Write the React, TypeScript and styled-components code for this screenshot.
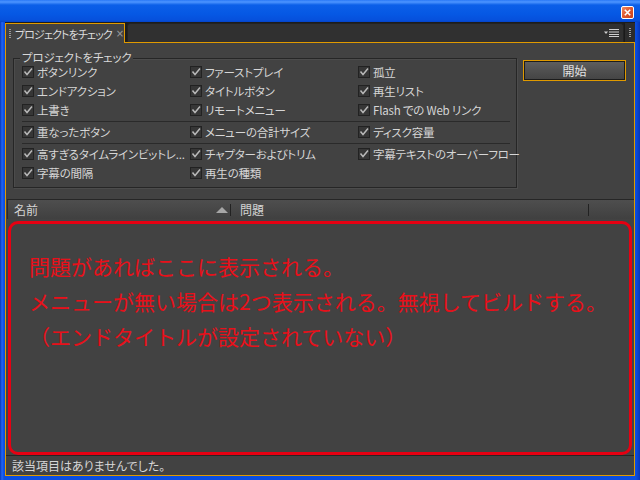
import React from 'react';
import styled, { createGlobalStyle } from 'styled-components';

const GlobalStyle = createGlobalStyle`
  html, body {
    margin: 0;
    padding: 0;
    background: #0a4ee0;
  }
  body {
    font-family: "Noto Sans CJK JP", "Noto Sans", sans-serif;
  }
`;

const ORANGE = '#e09a00';
const PANEL = '#424242';

const Window = styled.div`
  width: 640px;
  height: 480px;
  display: flex;
  flex-direction: column;
  overflow: hidden;
  background: linear-gradient(90deg, #0636b8 0, #2466f4 2px, #0a4ee0 4px, #0a4ee0 calc(100% - 4px), #0636b8 100%);
`;

const TitleBar = styled.div`
  height: 22px;
  flex: none;
  display: flex;
  align-items: flex-start;
  justify-content: flex-end;
  background: linear-gradient(180deg, #2a78f6 0, #4d95ff 2px, #0b5fe8 5px, #0658e4 14px, #0650dc 20px, #0544c8 22px);
`;

const CloseButton = styled.div`
  width: 13px;
  height: 13px;
  margin: 6px 6px 0 0;
  box-sizing: border-box;
  border: 1px solid #fff;
  border-radius: 2px;
  background: linear-gradient(135deg, #f08a64 0, #e05a30 45%, #c8401c 100%);
  display: flex;
  align-items: center;
  justify-content: center;
`;

const Frame = styled.div`
  flex: 1;
  min-height: 0;
  display: flex;
  flex-direction: column;
  padding: 0 5px 4px 5px;
`;

const TabBar = styled.div`
  height: 20px;
  flex: none;
  display: flex;
  align-items: flex-end;
  background: #1c1c1c;
  position: relative;
  z-index: 1;
`;

const Tab = styled.div`
  width: 120px;
  height: 20px;
  box-sizing: border-box;
  margin-bottom: -1px;
  border: 1px solid ${ORANGE};
  border-bottom: none;
  background: ${PANEL};
  display: flex;
  align-items: center;
  padding-left: 3px;
  gap: 4px;
  overflow: hidden;
`;

const Grip = styled.span`
  width: 2px;
  height: 10px;
  flex: none;
  background: repeating-linear-gradient(180deg, #9a9a9a 0 1px, transparent 1px 2px);
`;

const TabLabel = styled.span`
  font-size: 11px;
  line-height: 14px;
  letter-spacing: -0.9px;
  color: #dcdcdc;
  font-feature-settings: "palt";
  white-space: nowrap;
`;

const TabClose = styled.span`
  font-size: 10px;
  line-height: 10px;
  color: #9a9a9a;
  margin-left: auto;
  margin-right: 3px;
  font-family: "DejaVu Sans", sans-serif;
  flex: none;
`;

const TabStrip = styled.div`
  flex: 1;
  height: 19px;
  margin-left: 2px;
  box-sizing: border-box;
  border: 1px solid #222;
  border-bottom: none;
  border-radius: 3px 3px 0 0;
  background: #303030;
  display: flex;
  align-items: center;
  justify-content: flex-end;
  padding-right: 4px;
`;

const SideGrip = styled.div`
  width: 11px;
  height: 19px;
  flex: none;
  display: flex;
  align-items: center;
  justify-content: center;
  background: #2c2c2c;
  border-left: 1px solid #1a1a1a;
  box-sizing: border-box;
`;

const Body = styled.div`
  flex: 1;
  min-height: 0;
  display: flex;
  flex-direction: column;
  border: 1px solid ${ORANGE};
  background: ${PANEL};
`;

const TopArea = styled.div`
  flex: none;
  display: flex;
  align-items: flex-start;
  padding: 15px 0 11px 7px;
`;

const GroupBox = styled.div`
  position: relative;
  width: 504px;
  height: 130px;
  box-sizing: border-box;
  border: 1px solid #262626;
  box-shadow: inset 1px 1px 0 #4c4c4c, 1px 1px 0 #4c4c4c;
  padding: 3px 0 0 8px;
`;

const GroupLegend = styled.span`
  position: absolute;
  top: -9px;
  left: 6px;
  padding: 0 2px;
  background: ${PANEL};
  font-size: 11.5px;
  line-height: 14px;
  letter-spacing: -0.2px;
  color: #d8d8d8;
  font-feature-settings: "palt";
`;

const CheckSection = styled.div`
  display: grid;
  grid-template-columns: 168px 168px 1fr;
  grid-auto-rows: 19px;
`;

const Divider = styled.div`
  height: 1px;
  margin: 2px 6px 0 0;
  background: #2a2a2a;
`;

const CheckItem = styled.label`
  display: flex;
  align-items: center;
  gap: 3px;
  white-space: nowrap;
  font-size: 11.5px;
  line-height: 14px;
  letter-spacing: -0.2px;
  color: #d6d6d6;
  font-feature-settings: "palt";
`;

const CheckMark = styled.svg`
  flex: none;
  display: block;
`;

const StartButton = styled.div`
  width: 103px;
  height: 21px;
  margin: 2px 0 0 6px;
  box-sizing: border-box;
  border: 1px solid ${ORANGE};
  display: flex;
`;

const StartInner = styled.div`
  flex: 1;
  border: 1px solid #1c1c1c;
  background: linear-gradient(180deg, #5e5e5e 0, #505050 50%, #454545 100%);
  display: flex;
  align-items: center;
  justify-content: center;
  font-size: 12px;
  color: #e4e4e4;
`;

const ResultList = styled.div`
  flex: 1;
  min-height: 0;
  display: flex;
  flex-direction: column;
  margin-left: 1px;
`;

const ListHeader = styled.div`
  height: 20px;
  flex: none;
  box-sizing: border-box;
  border-top: 1px solid #262626;
  border-left: 1px solid #2a2a2a;
  background: linear-gradient(180deg, #4e4e4e 0, #474747 50%, #404040 100%);
  display: flex;
  align-items: center;
  padding-left: 6px;
`;

const HeaderCell = styled.div<{ $width: number; $pad?: number }>`
  width: ${({ $width }) => $width}px;
  padding-left: ${({ $pad }) => $pad ?? 0}px;
  box-sizing: border-box;
  flex: none;
  display: flex;
  align-items: center;
  font-size: 12px;
  color: #d4d4d4;
`;

const SortArrow = styled.span`
  width: 0;
  height: 0;
  margin-left: auto;
  border-left: 6px solid transparent;
  border-right: 6px solid transparent;
  border-bottom: 6px solid #a6a6a6;
`;

const HeaderDivider = styled.span`
  width: 1px;
  height: 12px;
  flex: none;
  background: #222;
  margin: 0 0 0 2px;
`;

const Notice = styled.div`
  flex: 1;
  min-height: 0;
  margin: 2px 2px 0 1px;
  border: 3px solid #e60012;
  border-radius: 10px;
  padding: 25px 0 0 18px;
`;

const NoticeLine = styled.div`
  font-size: 21px;
  line-height: 35px;
  color: #e8101a;
  white-space: nowrap;
`;

const StatusBar = styled.div`
  height: 20px;
  flex: none;
  box-sizing: border-box;
  border-top: 1px solid #262626;
  padding-left: 6px;
  font-size: 12px;
  line-height: 19px;
  color: #d6d6d6;
  font-feature-settings: "palt";
`;

const sections: string[][] = [
  [
    'ボタンリンク', 'ファーストプレイ', '孤立',
    'エンドアクション', 'タイトルボタン', '再生リスト',
    '上書き', 'リモートメニュー', 'Flash での Web リンク',
  ],
  ['重なったボタン', 'メニューの合計サイズ', 'ディスク容量'],
  [
    '高すぎるタイムラインビットレ...', 'チャプターおよびトリム', '字幕テキストのオーバーフロー',
    '字幕の間隔', '再生の種類',
  ],
];

const CheckBox = () => (
  <CheckMark width="12" height="12" viewBox="0 0 12 12">
    <rect x="0.5" y="0.5" width="11" height="11" fill="#363636" stroke="#222" />
    <path d="M2.5 5.5 L5 8.5 L10 2.5" fill="none" stroke="#b8b8b8" strokeWidth="1.5" />
  </CheckMark>
);

export default function App() {
  return (
    <>
      <GlobalStyle />
      <Window>
        <TitleBar>
          <CloseButton>
            <svg width="7" height="7" viewBox="0 0 7 7">
              <path d="M0.8 0.8 L6.2 6.2 M6.2 0.8 L0.8 6.2" stroke="#fff" strokeWidth="1.6" />
            </svg>
          </CloseButton>
        </TitleBar>
        <Frame>
          <TabBar>
            <Tab>
              <Grip />
              <TabLabel>プロジェクトをチェック</TabLabel>
              <TabClose>×</TabClose>
            </Tab>
            <TabStrip>
              <svg width="15" height="8" viewBox="0 0 15 8">
                <path d="M0 2.5 L4 2.5 L2 5 Z" fill="#cfcfcf" />
                <path d="M5 0.5 H15 M5 3 H15 M5 5.5 H15 M5 7.5 H15" stroke="#cfcfcf" strokeWidth="1" />
              </svg>
            </TabStrip>
            <SideGrip>
              <Grip />
            </SideGrip>
          </TabBar>
          <Body>
            <TopArea>
              <GroupBox>
                <GroupLegend>プロジェクトをチェック</GroupLegend>
                {sections.map((items, i) => (
                  <React.Fragment key={i}>
                    {i > 0 && <Divider />}
                    <CheckSection>
                      {items.map((label) => (
                        <CheckItem key={label}>
                          <CheckBox />
                          {label}
                        </CheckItem>
                      ))}
                    </CheckSection>
                  </React.Fragment>
                ))}
              </GroupBox>
              <StartButton>
                <StartInner>開始</StartInner>
              </StartButton>
            </TopArea>
            <ResultList>
              <ListHeader>
                <HeaderCell $width={214}>
                  名前
                  <SortArrow />
                </HeaderCell>
                <HeaderDivider />
                <HeaderCell $width={355} $pad={9}>問題</HeaderCell>
                <HeaderDivider />
              </ListHeader>
              <Notice>
                <NoticeLine>問題があればここに表示される。</NoticeLine>
                <NoticeLine>メニューが無い場合は2つ表示される。無視してビルドする。</NoticeLine>
                <NoticeLine>（エンドタイトルが設定されていない）</NoticeLine>
              </Notice>
            </ResultList>
            <StatusBar>該当項目はありませんでした。</StatusBar>
          </Body>
        </Frame>
      </Window>
    </>
  );
}
